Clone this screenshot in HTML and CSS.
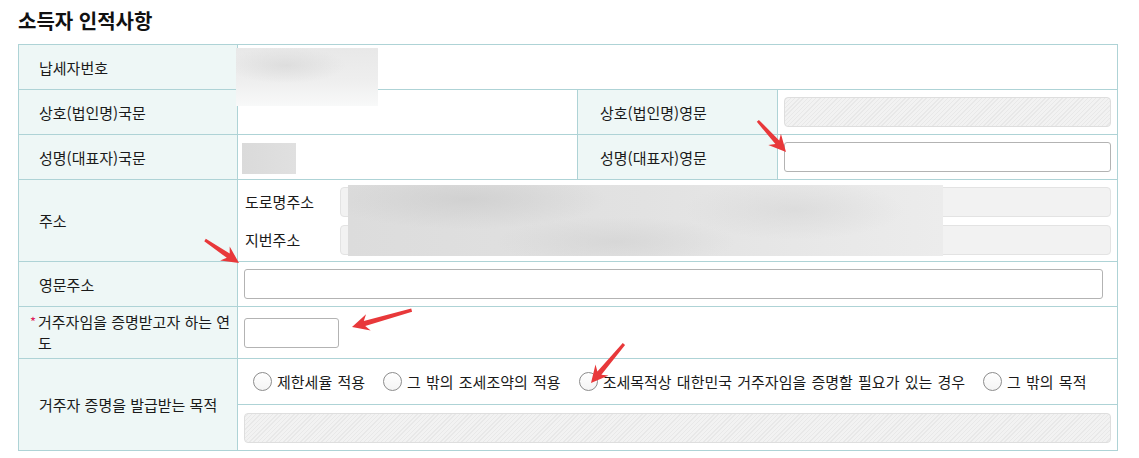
FILE: index.html
```html
<!DOCTYPE html>
<html lang="ko">
<head>
<meta charset="utf-8">
<title>소득자 인적사항</title>
<link rel="stylesheet" href="styles.css">
</head>
<body>
<div class="page">
  <h2 class="title">소득자 인적사항</h2>
  <div class="form-grid">
    <div class="label">납세자번호</div>
    <div class="value span3"></div>

    <div class="label">상호(법인명)국문</div>
    <div class="value"></div>
    <div class="label l2">상호(법인명)영문</div>
    <div class="value"><span class="field hatched"></span></div>

    <div class="label">성명(대표자)국문</div>
    <div class="value"></div>
    <div class="label l2">성명(대표자)영문</div>
    <div class="value"><span class="field"></span></div>

    <div class="label">주소</div>
    <div class="value span3 address">
      <div class="addr-row"><span class="sub-label">도로명주소</span><span class="field grey"></span></div>
      <div class="addr-row"><span class="sub-label">지번주소</span><span class="field grey"></span></div>
    </div>

    <div class="label">영문주소</div>
    <div class="value span3"><span class="field eng-addr"></span></div>

    <div class="label wrap"><span class="req">*</span>거주자임을 증명받고자 하는 연도</div>
    <div class="value span3"><span class="field year"></span></div>

    <div class="label">거주자 증명을 발급받는 목적</div>
    <div class="value span3 purpose">
      <div class="radio-group">
        <label class="radio-item"><span class="radio"></span>제한세율 적용</label>
        <label class="radio-item"><span class="radio"></span>그 밖의 조세조약의 적용</label>
        <label class="radio-item"><span class="radio"></span>조세목적상 대한민국 거주자임을 증명할 필요가 있는 경우</label>
        <label class="radio-item"><span class="radio"></span>그 밖의 목적</label>
      </div>
      <div class="purpose-etc"><span class="field hatched"></span></div>
    </div>
  </div>

  <div class="redact r1"></div>
  <div class="redact r2"></div>
  <div class="redact r3"></div>

  <svg class="arrows" width="1139" height="458" viewBox="0 0 1139 458" aria-hidden="true">
    <g fill="#e8383a">
      <path transform="translate(786 152) rotate(47.9)" d="M0 0 L-17 -8.5 L-13 -2.6 L-42 -1.4 L-42 1.4 L-13 2.6 L-17 8.5 Z"/>
      <path transform="translate(239 263) rotate(34.1)" d="M0 0 L-17 -8.5 L-13 -2.6 L-41 -1.4 L-41 1.4 L-13 2.6 L-17 8.5 Z"/>
      <path transform="translate(352 327) rotate(164.2)" d="M0 0 L-17 -8.5 L-13 -2.6 L-62 -1.6 L-62 1.6 L-13 2.6 L-17 8.5 Z"/>
      <path transform="translate(591 383) rotate(130.2)" d="M0 0 L-17 -8.5 L-13 -2.6 L-51 -1.5 L-51 1.5 L-13 2.6 L-17 8.5 Z"/>
    </g>
  </svg>
</div>
</body>
</html>
```
FILE: styles.css
```css
* { box-sizing: border-box; }
html, body { margin: 0; padding: 0; background: #fff; }
body {
  font-family: "Noto Sans CJK KR", "Noto Sans", sans-serif;
  font-size: 15px;
  color: #1a1a1a;
}
.page {
  position: relative;
  width: 1139px;
  height: 458px;
  padding: 7px 18px 0 18px;
}
.title {
  margin: 0 0 10px 0;
  font-size: 20px;
  font-weight: 700;
  line-height: 27px;
  color: #111;
}
.form-grid {
  display: grid;
  width: 1100px;
  grid-template-columns: 218px 339px 199px 339px;
  grid-template-rows: 44px 44px 44px 81px 44px 51px 91px;
  gap: 1px;
  background: #aed3d6;
  border: 1px solid #aed3d6;
}
.label {
  background: #eef7f6;
  display: flex;
  align-items: center;
  padding: 0 8px 0 20px;
  line-height: 21px;
}
.label.l2 { padding-left: 22px; }
.label.wrap { display: block; padding: 4px 3px 0 19px; }
.req {
  display: inline-block;
  width: 6px;
  margin-left: -8px;
  margin-right: 2px;
  color: #e0185a;
  font-size: 13px;
  vertical-align: 1px;
}
.value {
  background: #fff;
  display: flex;
  align-items: center;
  padding: 0 6px;
}
.span3 { grid-column: span 3; }
.field {
  display: block;
  flex: 1;
  height: 30px;
  border: 1px solid #b3b3b3;
  border-radius: 3px;
  background: #fff;
}
.field.hatched {
  border-color: #dedede;
  border-radius: 4px;
  background-color: #f2f2f2;
  background-image: repeating-linear-gradient(-45deg, rgba(0,0,0,0) 0 2px, rgba(0,0,0,0.045) 2px 3px);
}
.field.grey {
  border-color: #e3e3e3;
  border-radius: 4px;
  background: #f2f2f2;
}
.field.eng-addr { flex: 0 0 859px; }
.field.year { flex: 0 0 95px; }
.address {
  flex-direction: column;
  align-items: stretch;
  justify-content: center;
  gap: 8px;
}
.addr-row { display: flex; align-items: center; }
.sub-label { width: 96px; padding-left: 1px; }
.purpose {
  flex-direction: column;
  align-items: stretch;
  padding: 0;
}
.radio-group {
  height: 46px;
  display: flex;
  align-items: center;
  gap: 18px;
  padding-left: 15px;
  border-bottom: 1px solid #aed3d6;
  word-spacing: 1px;
}
.radio-item { display: flex; align-items: center; }
.radio {
  display: inline-block;
  width: 19px;
  height: 19px;
  margin-right: 5px;
  border: 1px solid #8c8c8c;
  border-radius: 50%;
  background: linear-gradient(#ffffff, #f4f4f4);
}
.purpose-etc {
  flex: 1;
  display: flex;
  align-items: center;
  padding: 0 6px;
}
.redact { position: absolute; }
.r1 {
  left: 236px; top: 48px; width: 142px; height: 58px;
  background:
    radial-gradient(ellipse 60px 18px at 35% 30%, rgba(210,210,210,0.55), rgba(210,210,210,0)),
    linear-gradient(180deg, #e8e8e8 0%, #eeeeee 55%, #f8f9f9 100%);
}
.r2 {
  left: 242px; top: 143px; width: 54px; height: 31px;
  background: linear-gradient(90deg, #dadada, #e0e0e0);
}
.r3 {
  left: 348px; top: 185px; width: 595px; height: 71px;
  background:
    radial-gradient(ellipse 140px 30px at 20% 20%, rgba(200,200,200,0.6), rgba(200,200,200,0)),
    radial-gradient(ellipse 120px 25px at 45% 80%, rgba(205,205,205,0.5), rgba(205,205,205,0)),
    radial-gradient(ellipse 110px 30px at 75% 35%, rgba(210,210,210,0.5), rgba(210,210,210,0)),
    linear-gradient(90deg, #dcdcdc 0%, #e2e2e2 50%, #ececec 100%);
}
.arrows { position: absolute; left: 0; top: 0; pointer-events: none; }
```
